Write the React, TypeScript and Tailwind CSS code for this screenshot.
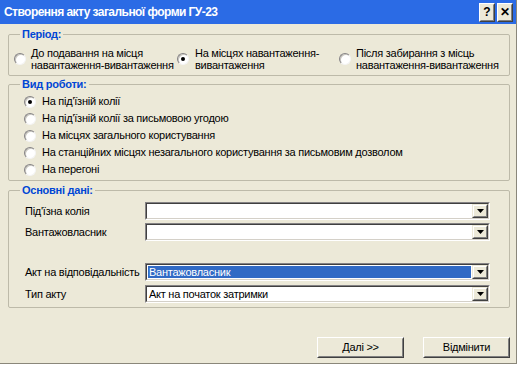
import React from "react";

type RadioProps = { checked?: boolean };

function Radio({ checked }: RadioProps) {
  return (
    <div className="w-[12px] h-[12px] shrink-0 rounded-full border border-t-[#848284] border-l-[#848284] border-b-[#f4f4f4] border-r-[#f4f4f4] bg-white flex items-center justify-center shadow-[inset_1px_1px_0_#c8c6be]">
      {checked && <div className="w-[4px] h-[4px] rounded-full bg-black" />}
    </div>
  );
}

function DropButton() {
  return (
    <div className="w-[16px] h-full shrink-0 border border-t-[#ece9d8] border-l-[#ece9d8] border-b-[#404040] border-r-[#404040]">
      <div className="w-full h-full bg-[#ece9d8] border border-t-white border-l-white border-b-[#808080] border-r-[#808080] flex items-center justify-center">
        <svg width="7" height="4" viewBox="0 0 7 4">
          <path d="M0 0h7L3.5 4z" fill="#000" />
        </svg>
      </div>
    </div>
  );
}

function Combo({ value, selected }: { value?: string; selected?: boolean }) {
  return (
    <div className="w-[345px] h-[18px] border border-t-[#848284] border-l-[#848284] border-b-white border-r-white">
      <div className="w-full h-full border border-t-[#404040] border-l-[#404040] border-b-[#d4d0c8] border-r-[#d4d0c8] bg-white flex">
        <div className="flex-1 p-[1px] flex">
          <div
            className={
              selected
                ? "flex-1 bg-[#316ac5] text-white pl-[1px] leading-[12px] whitespace-nowrap"
                : "flex-1 text-black pl-[1px] leading-[12px] whitespace-nowrap"
            }
          >
            {value}
          </div>
        </div>
        <DropButton />
      </div>
    </div>
  );
}

function Button({ label }: { label: string }) {
  return (
    <button className="w-[87px] h-[21px] border border-t-white border-l-white border-b-[#404040] border-r-[#404040]">
      <div className="w-full h-full border border-t-[#ece9d8] border-l-[#ece9d8] border-b-[#808080] border-r-[#808080] flex items-center justify-center text-black">
        {label}
      </div>
    </button>
  );
}

function TitleButton({ children }: { children: React.ReactNode }) {
  return (
    <div className="w-[16px] h-[19px] border border-t-white border-l-white border-b-[#404040] border-r-[#404040] bg-[#ece9d8]">
      <div className="w-full h-full border border-t-[#ece9d8] border-l-[#ece9d8] border-b-[#808080] border-r-[#808080] flex items-center justify-center text-black text-[12px] font-bold leading-none tracking-normal">
        {children}
      </div>
    </div>
  );
}

const workTypes = [
  "На під'їзній колії",
  "На під'їзній колії за письмовою угодою",
  "На місцях загального користування",
  "На станційних місцях незагального користування за письмовим дозволом",
  "На перегоні",
];

export default function App() {
  return (
    <div className="w-[518px] h-[366px] bg-white font-['Liberation_Sans',Arial,sans-serif] text-[11px] tracking-[-0.25px] text-black whitespace-nowrap">
      <div className="w-[517px] h-[364px] bg-[#ece9d8] border-r border-b border-[#8a877a] flex flex-col">
        {/* Title bar */}
        <div className="h-[24px] shrink-0 bg-[#2b6be5] flex items-center justify-between pl-[4px] pr-[3px]">
          <span className="text-white text-[12px] font-bold tracking-[-0.55px]">
            Створення акту загальної форми ГУ-23
          </span>
          <div className="flex gap-[2px]">
            <TitleButton>?</TitleButton>
            <TitleButton>✕</TitleButton>
          </div>
        </div>

        <div className="flex flex-col pl-[8px] pr-[6px]">
          {/* Period */}
          <fieldset className="mt-[4px] h-[48px] border border-[#bdbaa9] rounded-[2px]">
            <legend className="ml-[11px] px-[2px] font-bold text-[#0046d5] leading-[13px]">Період:</legend>
            <div className="grid grid-cols-[163px_162px_1fr] pl-[5px] mt-[6px] leading-[12px]">
              <div className="flex items-center gap-[5px]">
                <Radio />
                <span>
                  До подавання на місця
                  <br />
                  навантаження-вивантаження
                </span>
              </div>
              <div className="flex items-center gap-[6px]">
                <Radio checked />
                <span>
                  На місцях навантаження-
                  <br />
                  вивантаження
                </span>
              </div>
              <div className="flex items-center gap-[5px]">
                <Radio />
                <span>
                  Після забирання з місць
                  <br />
                  навантаження-вивантаження
                </span>
              </div>
            </div>
          </fieldset>

          {/* Work type */}
          <fieldset className="mt-[2px] h-[103px] border border-[#bdbaa9] rounded-[2px]">
            <legend className="ml-[11px] px-[2px] font-bold text-[#0046d5] leading-[13px]">Вид роботи:</legend>
            <div className="flex flex-col pl-[15px] mt-[2px]">
              {workTypes.map((t, i) => (
                <div key={t} className="h-[17px] flex items-center gap-[6px]">
                  <Radio checked={i === 0} />
                  <span>{t}</span>
                </div>
              ))}
            </div>
          </fieldset>

          {/* Main data */}
          <fieldset className="mt-[3px] h-[124px] border border-[#bdbaa9] rounded-[2px]">
            <legend className="ml-[11px] px-[2px] font-bold text-[#0046d5] leading-[13px]">Основні дані:</legend>
            <div className="flex flex-col pl-[16px] mt-[5px]">
              <div className="flex items-center">
                <span className="w-[120px]">Під'їзна колія</span>
                <Combo />
              </div>
              <div className="flex items-center mt-[3px]">
                <span className="w-[120px]">Вантажовласник</span>
                <Combo />
              </div>
              <div className="flex items-center mt-[22px]">
                <span className="w-[120px]">Акт на відповідальність</span>
                <Combo value="Вантажовласник" selected />
              </div>
              <div className="flex items-center mt-[4px]">
                <span className="w-[120px]">Тип акту</span>
                <Combo value="Акт на початок затримки" />
              </div>
            </div>
          </fieldset>

          {/* Buttons */}
          <div className="flex justify-end gap-[19px] mt-[29px]">
            <Button label="Далі >>" />
            <Button label="Відмінити" />
          </div>
        </div>
      </div>
    </div>
  );
}
